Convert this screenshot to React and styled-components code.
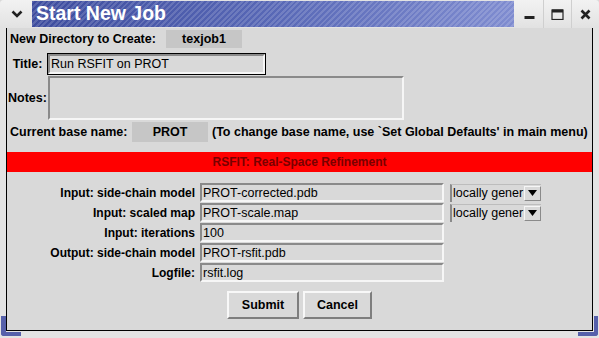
import React from 'react';
import styled, { createGlobalStyle } from 'styled-components';

const GlobalStyle = createGlobalStyle`
  html, body {
    margin: 0;
    padding: 0;
    background: #d9d9d9;
  }
  body {
    font-family: 'Liberation Sans', Arial, Helvetica, sans-serif;
    font-size: 12px;
    color: #000;
  }
`;

const Window = styled.div`
  position: relative;
  width: 599px;
  height: 338px;
  display: flex;
  flex-direction: column;
  background: #e3e3e3;
  overflow: hidden;
  border-radius: 4px 4px 0 0;

  /* resize handle corners */
  &::before,
  &::after {
    content: '';
    position: absolute;
    bottom: 2px;
    width: 20px;
    height: 20px;
    border-bottom: 4px solid #5660aa;
    box-sizing: border-box;
  }
  &::before {
    left: 1px;
    border-left: 5px solid #5660aa;
    border-bottom-left-radius: 3px;
  }
  &::after {
    right: 1px;
    border-right: 4px solid #5660aa;
    border-bottom-right-radius: 3px;
  }
`;

const TitleBar = styled.div`
  display: flex;
  height: 28px;
  flex-shrink: 0;
`;

const FrameButton = styled.div`
  width: ${(p) => p.$w}px;
  display: flex;
  align-items: center;
  justify-content: center;
  background: linear-gradient(#f2f2f2, #e2e2e2);
  border-left: 1px solid ${(p) => (p.$sep ? '#cfcfcf' : 'transparent')};
  box-sizing: border-box;
`;

const TitleStrip = styled.div`
  flex: 1;
  margin-top: 1px;
  margin-bottom: 1px;
  display: flex;
  align-items: center;
  padding-left: 4px;
  background:
    repeating-linear-gradient(135deg, rgba(255, 255, 255, 0.15) 0 2px, rgba(255, 255, 255, 0) 2px 4px),
    linear-gradient(to right, #3d4c9e, #5868b6 50%, #7f8cd0);
  color: #fff;
  font-weight: bold;
  font-size: 19.5px;
  line-height: 1;
`;

const Body = styled.div`
  flex: 1;
  display: flex;
  padding: 0 6px 7px 6px;
  min-height: 0;
`;

const Panel = styled.div`
  flex: 1;
  display: flex;
  flex-direction: column;
  background: #d9d9d9;
  border: 1px solid #000;
  border-top: none;
`;

const InfoRow = styled.div`
  display: flex;
  align-items: center;
  height: ${(p) => p.$h}px;
  margin-top: ${(p) => p.$mt}px;
  padding-left: 3px;
  font-weight: bold;
  font-size: 12.5px;
  white-space: nowrap;
`;

const InfoLabel = styled.div`
  width: ${(p) => p.$w}px;
  flex-shrink: 0;
`;

const ValueBox = styled.div`
  width: 76px;
  height: 100%;
  display: flex;
  align-items: center;
  justify-content: center;
  background: #c6c6c6;
  margin-right: 4px;
  flex-shrink: 0;
`;

const TextRow = styled.div`
  display: flex;
  align-items: center;
  margin-top: ${(p) => p.$mt}px;
  padding-left: 1px;
`;

const SideLabel = styled.div`
  width: 39px;
  text-align: center;
  font-weight: bold;
  font-size: 12.5px;
  flex-shrink: 0;
`;

const FocusRing = styled.div`
  border: 1px solid #000;
  display: flex;
`;

const Sunken = styled.div`
  width: ${(p) => p.$w}px;
  height: ${(p) => p.$h}px;
  margin-left: ${(p) => p.$ml || 0}px;
  box-sizing: border-box;
  border: 2px solid;
  border-color: #8a8a8a #f6f6f6 #f6f6f6 #8a8a8a;
  background: #d9d9d9;
  display: flex;
  align-items: center;
  padding-left: 1px;
  font-size: 12.5px;
  white-space: nowrap;
  overflow: hidden;
`;

const SectionBar = styled.div`
  margin-top: 10px;
  height: 20px;
  background: #ff0000;
  color: #780000;
  font-weight: bold;
  display: flex;
  align-items: center;
  justify-content: center;
`;

const FormGrid = styled.div`
  margin-top: 11px;
  display: grid;
  grid-template-columns: 188px 244px 92px;
  grid-auto-rows: 19px;
  column-gap: 5px;
  row-gap: 1px;
  align-items: center;
`;

const FieldLabel = styled.div`
  font-weight: bold;
  text-align: right;
`;

const OptionMenu = styled.div`
  margin-left: 1px;
  height: 18px;
  display: flex;
  align-items: center;
  box-sizing: border-box;
  border-left: 2px solid #8a8a8a;
  border-top: 1px solid #bdbdbd;
  font-size: 12.5px;
`;

const OptionText = styled.div`
  width: 72px;
  overflow: hidden;
  white-space: nowrap;
  padding-left: 1px;
`;

const OptionArrow = styled.div`
  width: 17px;
  height: 15px;
  box-sizing: border-box;
  border: 1px solid;
  border-color: #f6f6f6 #8a8a8a #8a8a8a #f6f6f6;
  display: flex;
  align-items: center;
  justify-content: center;
`;

const ButtonRow = styled.div`
  margin-top: 9px;
  display: flex;
  justify-content: center;
  gap: 4px;
`;

const Button = styled.div`
  width: ${(p) => p.$w}px;
  height: 28px;
  box-sizing: border-box;
  border: 2px solid;
  border-color: #f8f8f8 #7e7e7e #7e7e7e #f8f8f8;
  display: flex;
  align-items: center;
  justify-content: center;
  font-weight: bold;
  font-size: 12.5px;
`;

const Chevron = () => (
  <svg width="12" height="9" viewBox="0 0 12 9">
    <path d="M1.5 1.5 L6 6 L10.5 1.5" fill="none" stroke="#222" strokeWidth="2.6" />
  </svg>
);

const MinIcon = () => (
  <svg width="11" height="11" viewBox="0 0 11 11">
    <rect x="0.5" y="7" width="10" height="3" fill="#222" />
  </svg>
);

const MaxIcon = () => (
  <svg width="13" height="11" viewBox="0 0 13 11">
    <rect x="1" y="1" width="11" height="9.5" fill="none" stroke="#222" strokeWidth="1.2" />
    <rect x="1" y="0.5" width="11" height="3" fill="#222" />
  </svg>
);

const CloseIcon = () => (
  <svg width="11" height="11" viewBox="0 0 11 11">
    <path d="M1.5 1.5 L9.5 9.5 M9.5 1.5 L1.5 9.5" stroke="#222" strokeWidth="2.6" />
  </svg>
);

const ArrowDown = () => (
  <svg width="9" height="6" viewBox="0 0 9 6">
    <path d="M0 0 H9 L4.5 6 Z" fill="#000" />
  </svg>
);

const fields = [
  { label: 'Input: side-chain model', value: 'PROT-corrected.pdb', option: true },
  { label: 'Input: scaled map', value: 'PROT-scale.map', option: true },
  { label: 'Input: iterations', value: '100' },
  { label: 'Output: side-chain model', value: 'PROT-rsfit.pdb' },
  { label: 'Logfile:', value: 'rsfit.log' },
];

export default function App() {
  return (
    <>
      <GlobalStyle />
      <Window>
        <TitleBar>
          <FrameButton $w={32}>
            <Chevron />
          </FrameButton>
          <TitleStrip>Start New Job</TitleStrip>
          <FrameButton $w={29}>
            <MinIcon />
          </FrameButton>
          <FrameButton $w={28} $sep>
            <MaxIcon />
          </FrameButton>
          <FrameButton $w={28} $sep>
            <CloseIcon />
          </FrameButton>
        </TitleBar>
        <Body>
          <Panel>
            <InfoRow $h={18} $mt={2}>
              <InfoLabel $w={156}>New Directory to Create:</InfoLabel>
              <ValueBox>texjob1</ValueBox>
            </InfoRow>

            <TextRow $mt={5}>
              <SideLabel>Title:</SideLabel>
              <FocusRing>
                <Sunken $w={217} $h={20}>Run RSFIT on PROT</Sunken>
              </FocusRing>
            </TextRow>

            <TextRow $mt={1}>
              <SideLabel>Notes:</SideLabel>
              <Sunken $w={356} $h={44} $ml={1} />
            </TextRow>

            <InfoRow $h={20} $mt={2}>
              <InfoLabel $w={122}>Current base name:</InfoLabel>
              <ValueBox>PROT</ValueBox>
              <span>(To change base name, use `Set Global Defaults' in main menu)</span>
            </InfoRow>

            <SectionBar>RSFIT: Real-Space Refinement</SectionBar>

            <FormGrid>
              {fields.map((f) => (
                <React.Fragment key={f.label}>
                  <FieldLabel>{f.label}</FieldLabel>
                  <Sunken $w={244} $h={19}>{f.value}</Sunken>
                  {f.option ? (
                    <OptionMenu>
                      <OptionText>locally gener</OptionText>
                      <OptionArrow>
                        <ArrowDown />
                      </OptionArrow>
                    </OptionMenu>
                  ) : (
                    <div />
                  )}
                </React.Fragment>
              ))}
            </FormGrid>

            <ButtonRow>
              <Button $w={72}>Submit</Button>
              <Button $w={69}>Cancel</Button>
            </ButtonRow>
          </Panel>
        </Body>
      </Window>
    </>
  );
}
